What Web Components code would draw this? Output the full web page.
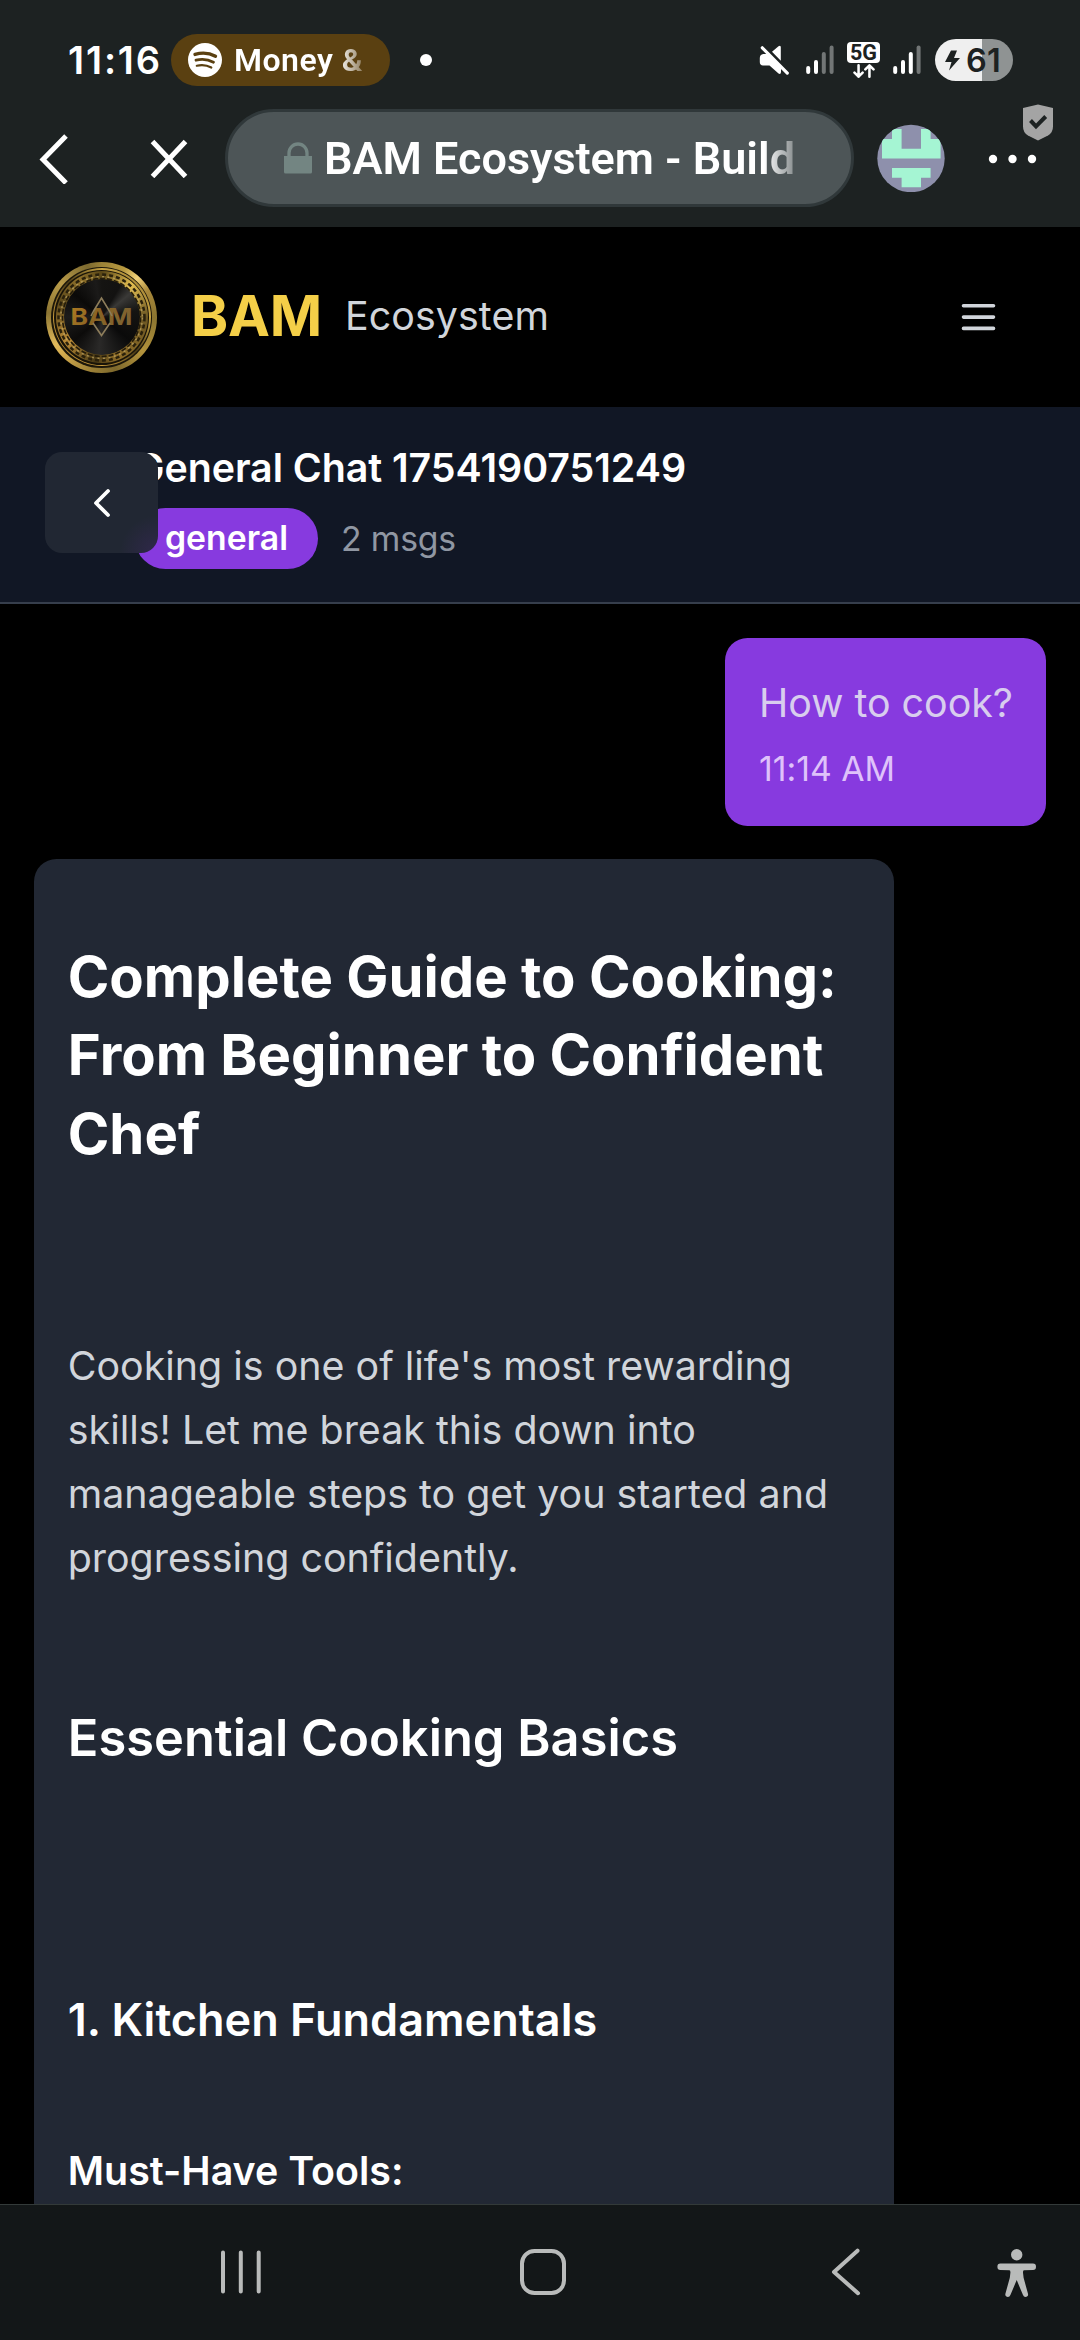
<!DOCTYPE html>
<html lang="en">
<head>
<meta charset="utf-8">
<title>BAM Ecosystem</title>
<style>
html,body{margin:0;padding:0;background:#000}
body{width:1080px;height:2340px;overflow:hidden;font-family:Inter,"Noto Sans",sans-serif}
</style>
</head>
<body>
<phone-screen></phone-screen>
<script>
const define = (name, html, setup) => {
  const t = document.createElement('template');
  t.innerHTML = html;
  customElements.define(name, class extends HTMLElement {
    connectedCallback() {
      if (this.shadowRoot) return;
      this.attachShadow({ mode: 'open' }).append(t.content.cloneNode(true));
      if (setup) setup(this);
    }
  });
};

/* Spreads its text over a given width by letter spacing. */
define('fit-text', `
<style>:host{display:block;white-space:nowrap;line-height:1.2}span{display:inline-block}</style>
<span><slot></slot></span>`, el => {
  const s = el.shadowRoot.querySelector('span');
  const n = el.textContent.length;
  const w = parseFloat(el.getAttribute('w'));
  const sp = (w - s.getBoundingClientRect().width) / n;
  s.style.letterSpacing = sp.toFixed(3) + 'px';
  el.style.width = w + 'px';
});

define('media-chip', `
<style>
:host{display:flex;align-items:center;box-sizing:border-box;width:219px;height:52px;border-radius:26px;background:#5a4011;padding-left:17px;gap:12px;color:#fff;font:600 32px Roboto,sans-serif}
fit-text{-webkit-mask:linear-gradient(90deg,#000 104px,rgba(0,0,0,.35) 128px);mask:linear-gradient(90deg,#000 104px,rgba(0,0,0,.35) 128px)}
</style>
<svg width="34" height="34" viewBox="0 0 34 34"><circle cx="17" cy="17" r="17" fill="#fff"/><g fill="none" stroke="#5a4011" stroke-linecap="round"><path d="M7 11.4c7-2 14.500-1.400 20.500 1.800" stroke-width="3.400"/><path d="M8 17.200c6-1.500 12-.9 17.500 2" stroke-width="2.800"/><path d="M8.800 22.700c5-1.200 10-.7 14.500 1.800" stroke-width="2.200"/></g></svg>
<fit-text w="129">Money &amp;</fit-text>`);

define('status-bar', `
<style>
:host{display:flex;align-items:center;height:52px;padding:34px 67px 0 68px;color:#fff}
.time{font:600 38px Inter,sans-serif}
.dot{width:12px;height:12px;border-radius:6px;background:#fff;margin-left:30px}
.right{display:flex;align-items:center;margin-left:auto}
.five{display:flex;flex-direction:column;align-items:center;width:33px;margin:0 13px;height:37px}
.five b{display:block;width:33px;height:21.500px;border-radius:4px;background:#fff;color:#1d2222;font:700 21.500px/22.500px Roboto,sans-serif;text-align:center}
.five svg{margin-top:1px}
.bat{display:flex;align-items:center;box-sizing:border-box;width:78px;height:42px;margin-left:14px;padding-left:10px;gap:6px;border-radius:21px;background:linear-gradient(90deg,#efefef 47px,#8f9393 47px);color:#1d2222;font:600 32.500px Inter,sans-serif}
</style>
<fit-text class="time" w="94">11:16</fit-text>
<media-chip style="margin-left:9px"></media-chip>
<div class="dot"></div>
<div class="right">
<svg width="30" height="30" viewBox="0 0 30 30" style="margin-right:17px" fill="#fff"><path d="M.8 13q0-3.500 3.500-4H8.500l13.500 14V27q-.2 2.800-2.500 1.500L10.500 20.500H4q-3.200-.3-3.200-3.500zM13 6.800l6.500-5.500q2.300-1.500 2.300 1v13.500z"/><path d="M3.300 2.800l25 25.300" fill="none" stroke="#fff" stroke-width="3.200" stroke-linecap="round"/></svg>
<svg width="28" height="30" viewBox="0 0 28 30" stroke-width="4" stroke-linecap="round"><path d="M2.200 27v-4M10 27V17" stroke="#fff"/><path d="M17.800 27V9M25.600 27V2.500" stroke="#727676"/></svg>
<div class="five"><b>5G</b><svg width="24" height="16" viewBox="0 0 24 16" fill="none" stroke="#fff" stroke-width="2.800" stroke-linecap="round" stroke-linejoin="round"><path d="M6 1.500V14M1.500 9.500L6 14l4.500-4.500M18 14V2M13.500 6L18 1.500 22.500 6"/></svg></div>
<svg width="28" height="30" viewBox="0 0 28 30" stroke-width="4" stroke-linecap="round"><path d="M2.200 27v-4M10 27V17M17.800 27V9" stroke="#fff"/><path d="M25.600 27V2.500" stroke="#727676"/></svg>
<div class="bat"><svg width="15" height="21" viewBox="0 0 15 21"><path d="M6 .5h6L9 8h6L4 20.500 6.500 12H0z" fill="#1d2222"/></svg><fit-text w="35">61</fit-text></div>
</div>`);

define('url-pill', `
<style>
:host{display:flex;align-items:center;box-sizing:border-box;width:629px;height:98px;border-radius:49px;background:#4d5557;border:3px solid #30383a;padding-left:56px;gap:12px;color:#fff;font:600 45px Roboto,sans-serif}
fit-text{margin-top:1px;-webkit-mask:linear-gradient(90deg,#000 440px,rgba(0,0,0,.3) 472px);mask:linear-gradient(90deg,#000 440px,rgba(0,0,0,.3) 472px)}
</style>
<svg width="28" height="32" viewBox="0 0 28 32"><path d="M0 14h28v16q0 1.500-1.500 1.500h-25Q0 31.500 0 30z" fill="#738582"/><path d="M5 16v-5a9 9 0 0118 0v5" fill="none" stroke="#738582" stroke-width="3.300"/></svg>
<fit-text w="471">BAM Ecosystem - Build</fit-text>`);

define('browser-bar', `
<style>
:host{display:flex;align-items:flex-start;height:118px;padding-top:23px}
.i{height:98px;display:flex;align-items:center}
.more{position:relative;margin-left:43px}
.shield{position:absolute;left:35px;top:-5px}
</style>
<div class="i" style="margin-left:38px"><svg width="32" height="52" viewBox="0 0 32 52"><path d="M28 4L5 27.500 28 51" fill="none" stroke="#fff" stroke-width="5" stroke-linejoin="miter"/></svg></div>
<div class="i" style="margin-left:79px"><svg width="40" height="40" viewBox="0 0 40 40"><path d="M3.500 3.500l33 35M36.500 3.500l-33 35" stroke="#fff" stroke-width="5"/></svg></div>
<url-pill style="margin-left:36px"></url-pill>
<div class="i" style="margin-left:23px"><svg width="68" height="68" viewBox="877 125 68 68"><defs><clipPath id="c"><circle cx="911" cy="159.500" r="33.700"/></clipPath></defs><g clip-path="url(#c)"><path d="M877 125h68v69h-68z" fill="#8e90ac"/><path d="M892 130h9.600v19.700H921V130h9.600v10h10v19.500H882V140h10zM892 169h38.600v9.700H921v9.600h-19.400v-9.600H892z" fill="#a5f5d3"/></g></svg></div>
<div class="i more"><svg width="50" height="10" viewBox="0 0 50 10" fill="#fff" style="margin-top:2px"><circle cx="5" cy="5" r="4.200"/><circle cx="24.500" cy="5" r="4.200"/><circle cx="44" cy="5" r="4.200"/></svg>
<svg class="shield" width="30" height="37" viewBox="0 0 30 37"><path d="M15 .5L30 4v18.500q0 6-5 9L15 36.500 5 31.500q-5-3-5-9V4z" fill="#a4a4a4"/><path d="M7.500 16.500l5.500 5.800 9.700-9.800" fill="none" stroke="#1d2222" stroke-width="4"/></svg></div>`);

define('bam-coin', `
<style>
:host{display:grid;width:111px;height:111px}
:host>*{grid-area:1/1;place-self:center;border-radius:50%}
.rim{width:111px;height:111px;background:conic-gradient(#9b8237,#b8993f 25deg,#f2d27a 42deg,#a9883a 60deg,#8a7430 90deg,#b3933c 130deg,#7d682c 165deg,#9a7f36 190deg,#d0a84c 225deg,#e0b95a 240deg,#8c7533 275deg,#b99b48 310deg,#7c692f 345deg,#9b8237)}
.gap{width:101px;height:101px;background:#1c170a}
.gap2{width:98px;height:98px;background:linear-gradient(45deg,#a87a2c,#c79a3c 25%,#4a3b16 50%,#c9a544 75%,#806626)}
.gap3{width:95px;height:95px;background:#191408}
.ring{width:92px;height:92px;background:conic-gradient(#5a4717,#e3bd4f 42deg,#6c5723 90deg,#8c6b26 160deg,#4b3b15 190deg,#b98a36 235deg,#5c491b 290deg,#8f712a 330deg,#5a4717)}
.face{width:76px;height:76px;background:conic-gradient(#151412,#131211 30deg,#3a3937 50deg,#151412 80deg,#0a0a0a 130deg,#2a2928 185deg,#0c0b0a 230deg,#1d1c1b 270deg,#0a0908 310deg,#1b1a19 350deg,#151412)}
svg{overflow:visible}
</style>
<div class="rim"></div><div class="gap"></div><div class="gap2"></div><div class="gap3"></div><div class="ring"></div><div class="face"></div>
<svg width="111" height="111" viewBox="0 0 111 111">
<defs><linearGradient id="g" x1="0" x2="1" y2=".3"><stop stop-color="#b07c22"/><stop offset=".5" stop-color="#8a6423"/><stop offset="1" stop-color="#7d6231"/></linearGradient></defs>
<g fill="none"><circle cx="55.500" cy="55.500" r="43" stroke="#2a210c" stroke-width="2.500" stroke-dasharray="4 3"/><circle cx="55.500" cy="55.500" r="40.800" stroke="#cbb272" stroke-width="1.600" stroke-dasharray="2 3.500" opacity=".6"/><circle cx="55.500" cy="55.500" r="39" stroke="#241c0b" stroke-width="1.600" stroke-dasharray="5 2"/></g>
<text x="55.500" y="63.300" text-anchor="middle" font-family="Inter,sans-serif" font-weight="700" font-size="22.500" textLength="62" lengthAdjust="spacingAndGlyphs" fill="url(#g)">BAM</text>
<path d="M47 50l8.500-14L64 50M47 61l8.500 12.500L64 61M47 50l-2 4M64 50l2 4" fill="none" stroke="#8d7d5b" stroke-width="1.600"/></svg>`);

define('app-header', `
<style>
:host{display:flex;align-items:center;box-sizing:border-box;height:180px;padding:0 84px 0 46px;background:#000}
b{margin-left:34px;font:700 56.250px/78px Inter,sans-serif;color:#f4cf48}
span{margin:-2px 0 0 23px;font:400 39.375px/56px Inter,sans-serif;color:#d1d5db}
.menu{margin-left:auto}
</style>
<bam-coin></bam-coin><b><fit-text w="131">BAM</fit-text></b><span><fit-text w="204">Ecosystem</fit-text></span>
<svg class="menu" width="35" height="28" viewBox="0 0 35 28" stroke="#d1d5db" stroke-width="3.600" stroke-linecap="round"><path d="M2.500 2.800h30M2.500 14.100h30M2.500 25.400h30"/></svg>`);

define('chat-header', `
<style>
:host{display:block;position:relative;box-sizing:border-box;height:197px;padding:33px 0 0 135px;background:#111725;border-bottom:2.500px solid #363e4c}
h2{margin:0;font:600 39.375px/56px Inter,sans-serif;color:#fff}
.row{display:flex;align-items:center;margin-top:12px;height:61px}
.badge{box-sizing:border-box;width:183px;height:61px;border-radius:30.500px;background:#873adf;color:#fff;font:600 33.750px/59px Inter,sans-serif;padding-left:30px}
.n{margin:-1px 0 0 23px;font:400 33.750px/45px Inter,sans-serif;color:#9097a3}
.back{position:absolute;left:45px;top:45px;width:113px;height:101px;border-radius:17px;background:radial-gradient(circle at 100% 100%,#30284b,rgba(48,40,75,0) 38px),linear-gradient(#212733,#212733);display:flex;align-items:center;justify-content:center}
.badge fit-text,.n fit-text{line-height:inherit}
h2 fit-text{line-height:56px}
</style>
<h2><fit-text w="551">General Chat 1754190751249</fit-text></h2>
<div class="row"><div class="badge"><fit-text w="123">general</fit-text></div><div class="n"><fit-text w="115">2 msgs</fit-text></div></div>
<div class="back"><svg width="18" height="30" viewBox="0 0 18 30"><path d="M15 3L3 15l12 12" fill="none" stroke="#fff" stroke-width="3.800" stroke-linecap="round" stroke-linejoin="round"/></svg></div>`);

define('user-message', `
<style>
:host{display:block;align-self:flex-end;box-sizing:border-box;width:321px;height:188px;padding:33px 34px;border-radius:22.500px;background:#873adf}
p{margin:0;font:400 39.375px/64px Inter,sans-serif;color:#d8cdee}
time{display:block;margin-top:11px;font:400 33.750px/45px Inter,sans-serif;color:#dfc2fa}
fit-text{line-height:inherit}
</style>
<p><fit-text w="254">How to cook?</fit-text></p><time><fit-text w="136">11:14 AM</fit-text></time>`);

define('assistant-message', `
<style>
:host{display:block;box-sizing:border-box;width:860px;height:1400px;margin-top:33px;padding:78.500px 33.750px 0;border-radius:22.500px;background:#222834;color:#fff;white-space:nowrap}
::slotted(*){margin-bottom:0!important}
::slotted(h1){font:700 56.250px/78.750px Inter,sans-serif!important;margin-top:0!important}
::slotted(p){font:400 39.375px/64px Inter,sans-serif!important;color:#d1d5db;margin-top:160.500px!important}
::slotted(h2){font:600 50.600px/71px Inter,sans-serif!important;margin-top:112px!important}
::slotted(h3){font:600 45px/63px Inter,sans-serif!important;margin-top:215px!important}
::slotted(h4){font:600 39.375px/55px Inter,sans-serif!important;margin-top:92px!important}
</style><slot></slot>`);

define('nav-bar', `
<style>
:host{display:flex;align-items:center;box-sizing:border-box;height:136px;padding:0 0 2px 219px;background:#131718;border-top:1px solid #333a39}
svg{display:block;fill:none;stroke:#b9bbba;stroke-width:4;stroke-linecap:round;stroke-linejoin:round}
</style>
<svg width="44" height="46" viewBox="0 0 44 46"><path d="M4 3.500v39M21.800 3.500v39M39.700 3.500v39"/></svg>
<svg width="48" height="48" viewBox="0 0 48 48" style="margin-left:256px"><rect x="3" y="3" width="42" height="42" rx="12.500"/></svg>
<svg width="32" height="48" viewBox="0 0 32 48" style="margin-left:263px"><path d="M27.500 2.700L4 24l24 21.200"/></svg>
<svg width="40" height="50" viewBox="0 0 40 50" style="margin-left:135px;fill:#b9bbba;stroke:none"><circle cx="19.700" cy="7.800" r="5.700"/><path d="M3.500 16.500h32.500q3 0 3 3.200t-3 3.300l-9 .3q-1.200 0-1 2.500l.6 5 4.400 16q.5 2.300-1.500 3-2.500.7-3.500-1.700l-6.300-15-6.300 15q-1 2.400-3.500 1.700-2-.7-1.500-3l4.400-16 .6-5q.2-2.500-1-2.500l-9-.3q-3 0-3-3.300t3.100-3.200z"/></svg>`);

define('phone-screen', `
<style>
:host{display:flex;flex-direction:column;width:1080px;height:2340px;overflow:hidden;background:#000}
.chrome{background:#1d2222;height:227px;flex:none}
.chat{flex:1;min-height:0;overflow:hidden;display:flex;flex-direction:column;padding:34px 34px 0}
.chat>*{flex:none}
</style>
<div class="chrome"><status-bar></status-bar><browser-bar></browser-bar></div>
<app-header></app-header>
<chat-header></chat-header>
<div class="chat">
<user-message></user-message>
<assistant-message>
<h1>Complete Guide to Cooking:<br>From Beginner to Confident<br>Chef</h1>
<p>Cooking is one of life's most rewarding<br>skills! Let me break this down into<br>manageable steps to get you started and<br>progressing confidently.</p>
<h2>Essential Cooking Basics</h2>
<h3>1. Kitchen Fundamentals</h3>
<h4>Must-Have Tools:</h4>
</assistant-message>
</div>
<nav-bar></nav-bar>`);
</script>
</body>
</html>
